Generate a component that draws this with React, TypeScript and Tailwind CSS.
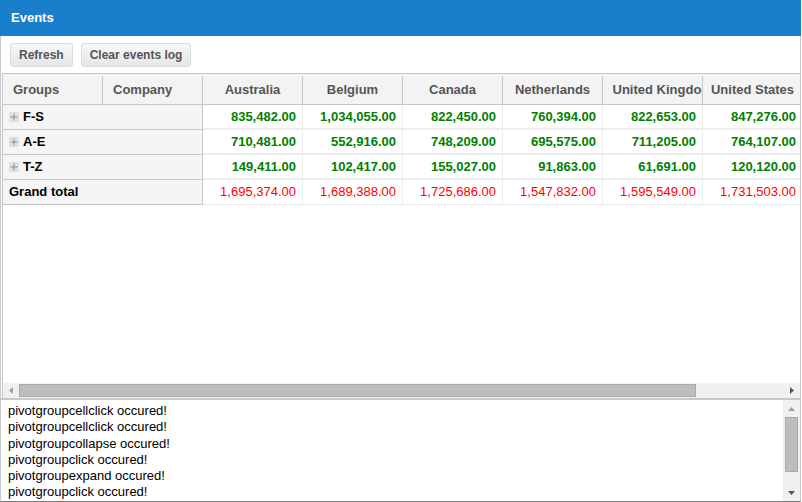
import React from 'react';

const countries = ['Australia', 'Belgium', 'Canada', 'Netherlands', 'United Kingdom', 'United States'];

const rows = [
  { label: 'F-S', values: ['835,482.00', '1,034,055.00', '822,450.00', '760,394.00', '822,653.00', '847,276.00'] },
  { label: 'A-E', values: ['710,481.00', '552,916.00', '748,209.00', '695,575.00', '711,205.00', '764,107.00'] },
  { label: 'T-Z', values: ['149,411.00', '102,417.00', '155,027.00', '91,863.00', '61,691.00', '120,120.00'] },
];

const totals = ['1,695,374.00', '1,689,388.00', '1,725,686.00', '1,547,832.00', '1,595,549.00', '1,731,503.00'];

const events = [
  'pivotgroupcellclick occured!',
  'pivotgroupcellclick occured!',
  'pivotgroupcollapse occured!',
  'pivotgroupclick occured!',
  'pivotgroupexpand occured!',
  'pivotgroupclick occured!',
];

const ExpandIcon = () => (
  <span className="mr-[4px] flex h-[10px] w-[10px] items-center justify-center bg-[#e2e2e2]">
    <svg width="8" height="8" viewBox="0 0 8 8">
      <path d="M4 0.5V7.5M0.5 4H7.5" stroke="#8a8a8a" strokeWidth="1" />
    </svg>
  </span>
);

const ToolButton: React.FC<{ children: React.ReactNode }> = ({ children }) => (
  <button className="h-[24px] rounded-[3px] border border-[#dcdcdc] bg-gradient-to-b from-[#f8f8f8] to-[#e6e6e6] px-[8px] text-[12px] font-bold text-[#555]">
    {children}
  </button>
);

export default function App() {
  return (
    <div
      className="flex h-[502px] w-[802px] flex-col bg-white"
      style={{ fontFamily: '"Liberation Sans", Arial, sans-serif' }}
    >
      <div className="flex h-[36px] w-[801px] items-center bg-[#1a7fca] px-[11px] text-[13px] font-bold text-white">
        Events
      </div>
      <div className="flex w-[801px] flex-1 flex-col border-x border-b border-[#c8c8c8] border-b-[#7a7a7a]">
        <div className="flex h-[37px] items-center gap-[8px] pl-[9px] pt-[1px]">
          <ToolButton>Refresh</ToolButton>
          <ToolButton>Clear events log</ToolButton>
        </div>

        <div className="ml-[1px] flex h-[325px] flex-col border-l border-t border-[#c6c6c6]">
          <div className="flex-1 overflow-hidden">
            <div className="flex h-[31px] w-[900px] border-b border-[#c6c6c6] bg-[#f3f3f3] pt-[2px] text-[13px] font-bold text-[#555]">
              <div className="flex w-[100px] items-center border-r border-[#c6c6c6] pl-[10px]">Groups</div>
              <div className="flex w-[100px] items-center border-r border-[#c6c6c6] pl-[10px]">Company</div>
              {countries.map((c) => (
                <div key={c} className="flex w-[100px] items-center justify-center overflow-hidden whitespace-nowrap border-r border-[#c6c6c6]">
                  {c === 'United Kingdom' ? <span className="w-[98px] overflow-hidden pl-[9px]">{c}</span> : c}
                </div>
              ))}
            </div>
            {rows.map((r) => (
              <div key={r.label} className="flex h-[25px] w-[900px] text-[13px]">
                <div className="flex w-[200px] items-center border-b border-r border-[#c6c6c6] bg-[#f5f5f5] pl-[6px] font-bold text-black">
                  <ExpandIcon />
                  <span>{r.label}</span>
                </div>
                {r.values.map((v, i) => (
                  <div key={i} className="flex w-[100px] items-center justify-end border-b-[2px] border-r border-[#ececec] pr-[6px] font-bold text-[#008000]">
                    {v}
                  </div>
                ))}
              </div>
            ))}
            <div className="flex h-[25px] w-[900px] text-[13px]">
              <div className="flex w-[200px] items-center border-b border-r border-[#c6c6c6] bg-[#f5f5f5] pl-[6px] font-bold text-black">
                Grand total
              </div>
              {totals.map((v, i) => (
                <div key={i} className="flex w-[100px] items-center justify-end border-b border-r border-[#ececec] pr-[6px] text-[#ff0000]">
                  {v}
                </div>
              ))}
            </div>
          </div>
          <div className="flex h-[15px] items-center bg-[#f0f0f0]">
            <div className="flex w-[16px] items-center justify-center">
              <svg width="4" height="7" viewBox="0 0 4 7">
                <path d="M4 0L0 3.5L4 7Z" fill="#a0a0a0" />
              </svg>
            </div>
            <div className="h-[13px] w-[677px] border border-[#aaaaaa] bg-[#bdbdbd]" />
            <div className="flex-1" />
            <div className="flex w-[16px] items-center justify-center">
              <svg width="4" height="7" viewBox="0 0 4 7">
                <path d="M0 0L4 3.5L0 7Z" fill="#555" />
              </svg>
            </div>
          </div>
        </div>

        <div className="flex flex-1 border-t-[2px] border-[#c8c8c8]">
          <div className="flex-1 overflow-hidden pl-[7px] pt-[3px] text-[13px] leading-[16.3px] text-black">
            {events.map((e, i) => (
              <div key={i}>{e}</div>
            ))}
          </div>
          <div className="flex w-[17px] flex-col items-center bg-[#f0f0f0]">
            <div className="flex h-[17px] items-center justify-center">
              <svg width="7" height="4" viewBox="0 0 7 4">
                <path d="M0 4L3.5 0L7 4Z" fill="#a0a0a0" />
              </svg>
            </div>
            <div className="h-[55px] w-[13px] border border-[#aaaaaa] bg-[#bdbdbd]" />
            <div className="flex-1" />
            <div className="flex h-[17px] items-center justify-center">
              <svg width="7" height="4" viewBox="0 0 7 4">
                <path d="M0 0L3.5 4L7 0Z" fill="#555" />
              </svg>
            </div>
          </div>
        </div>
      </div>
    </div>
  );
}
